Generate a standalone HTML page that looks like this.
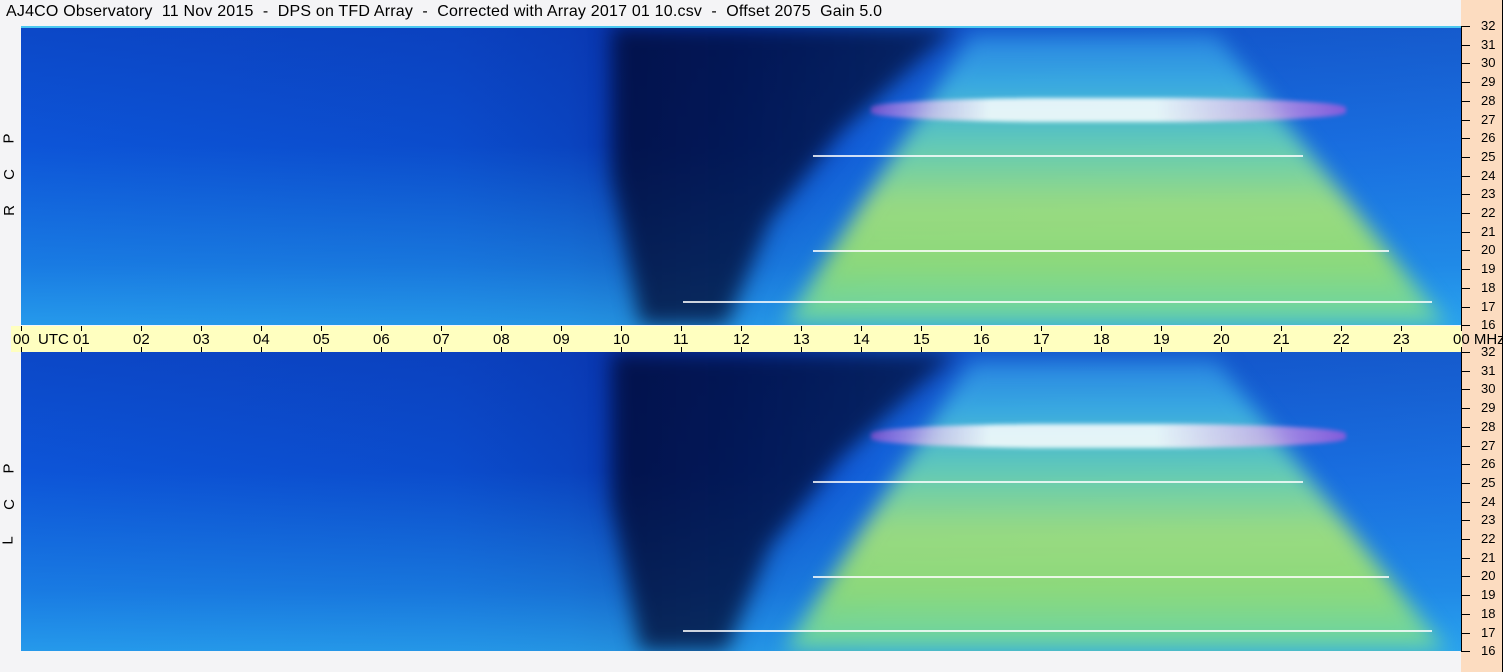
<!DOCTYPE html><html><head><style>
body{margin:0;width:1503px;height:672px;background:#f4f4f6;position:relative;overflow:hidden;font-family:"Liberation Sans",sans-serif;}
.t{position:absolute;left:6px;top:3px;font-size:16px;color:#000;white-space:pre;letter-spacing:.2px}
.p{position:absolute;left:21px;width:1440px;height:299px;overflow:hidden;
background:linear-gradient(90deg,#0d55d8 0%,#0b4ccc 30%,#0a44c0 38%,#0838b0 42%,#0a44c4 50%,#1464dc 60%,#1a70e0 100%);}
.p .v{position:absolute;inset:0;background:linear-gradient(180deg,rgba(10,40,160,.3) 0%,rgba(0,0,0,0) 40%,rgba(40,170,240,.45) 80%,rgba(50,190,245,.65) 100%);}
.bl{position:absolute;inset:0;filter:blur(10px)}
.d{position:absolute;inset:0;clip-path:polygon(41% 0,65% 0,57% 35%,52% 65%,49% 100%,43% 100%,41% 50%);background:linear-gradient(90deg,rgba(2,16,80,.2) 0%,rgba(1,10,50,.8) 35%,rgba(1,10,50,.7) 60%,rgba(2,16,80,.3) 100%)}
.g{position:absolute;inset:0;clip-path:polygon(53% 100%,66% 3%,83% 3%,99% 100%);
background:linear-gradient(180deg,#2a86e6 0%,#40b8e4 20%,#70dcb0 40%,#b0ec70 60%,#a0e868 80%,#70dca0 100%);opacity:.85}
.p .w{position:absolute;left:59%;top:24%;width:33%;height:8%;background:linear-gradient(90deg,rgba(230,80,220,.5),#fff 25%,#fff 60%,rgba(230,80,220,.6));opacity:.85;border-radius:40%;filter:blur(2px)}
.p .s{position:absolute;height:2px;background:#fff;opacity:.8}
.tk{position:absolute;left:1461px;width:9px;height:1px;background:#000}
.n{position:absolute;left:1481px;font-size:13px}
.yb{position:absolute;left:11px;top:326px;width:1451px;height:26px;background:#ffffc0}
.h{position:absolute;top:331px;font-size:15px}
.ht{position:absolute;width:1px;height:5px;background:#000}
.l{position:absolute;left:4px;font-size:15px;transform:rotate(-90deg)}
</style></head><body>
<div class="t">AJ4CO Observatory  11 Nov 2015  -  DPS on TFD Array  -  Corrected with Array 2017 01 10.csv  -  Offset 2075  Gain 5.0</div>
<div style="position:absolute;left:1461px;top:0;width:41px;height:672px;background:#fcdcc0;border-right:1px solid #000"></div>
<div style="position:absolute;left:1461px;top:26px;width:1px;height:626px;background:#000"></div>
<div class="p" style="top:26px"><div class="v"></div><div class="bl"><div class="d"></div><div class="g"></div></div><div class="w"></div>
<div class="s" style="left:46%;top:92%;width:52%"></div><div class="s" style="left:55%;top:75%;width:40%"></div><div class="s" style="left:55%;top:43%;width:34%"></div><div style="position:absolute;left:0;top:0;width:100%;height:2px;background:#4cc8f0"></div></div>
<div class="p" style="top:352px"><div class="v"></div><div class="bl"><div class="d"></div><div class="g"></div></div><div class="w"></div>
<div class="s" style="left:46%;top:93%;width:52%"></div><div class="s" style="left:55%;top:75%;width:40%"></div><div class="s" style="left:55%;top:43%;width:34%"></div></div>
<div class="yb"></div>
<div class="l" style="top:130px">P</div><div class="l" style="top:166px">C</div><div class="l" style="top:202px">R</div>
<div class="l" style="top:460px">P</div><div class="l" style="top:496px">C</div><div class="l" style="top:532px">L</div>
<div id="x"></div>
<script>
var s='';
var hs=['00  UTC','01','02','03','04','05','06','07','08','09','10','11','12','13','14','15','16','17','18','19','20','21','22','23','00 MHz'];
for(var i=0;i<25;i++){var x=21+i*60;s+='<div class="ht" style="left:'+x+'px;top:326px"></div><div class="ht" style="left:'+x+'px;top:347px"></div>';
s+='<div class="h" style="left:'+(i==0?13:x-8)+'px;white-space:pre">'+hs[i]+'</div>';}
for(var k=0;k<2;k++){var y0=k?352:26;for(var j=0;j<17;j++){var y=Math.round(y0+j*18.7);
s+='<div class="tk" style="top:'+y+'px"></div><div class="n" style="top:'+(y-8)+'px">'+(32-j)+'</div>';}}
document.getElementById('x').innerHTML=s;
</script>
</body></html>
